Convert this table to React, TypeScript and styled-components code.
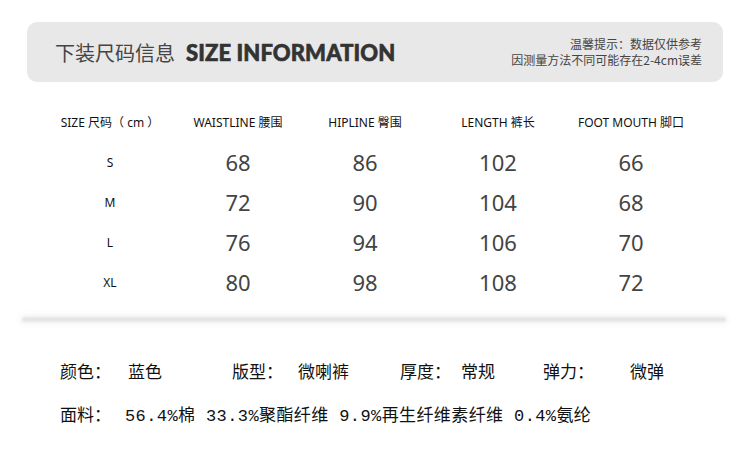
import React from 'react';
import styled, { createGlobalStyle } from 'styled-components';

const GlobalStyle = createGlobalStyle`
  html, body {
    margin: 0;
    padding: 0;
    background: #ffffff;
  }
  body {
    font-family: "Noto Sans", "Noto Sans CJK SC", sans-serif;
  }
`;

const Page = styled.div`
  width: 750px;
  height: 449px;
  overflow: hidden;
  background: #fff;
  padding-top: 22px;
  box-sizing: border-box;
`;

const Banner = styled.div`
  margin: 0 27px;
  height: 60px;
  border-radius: 10px;
  background: #e8e8e8;
  display: flex;
  align-items: center;
  justify-content: space-between;
  padding: 0 21px 0 28px;
`;

const Title = styled.div`
  display: flex;
  align-items: baseline;
  gap: 11px;
`;

const TitleCn = styled.span`
  font-family: "Noto Sans CJK SC", sans-serif;
  font-size: 20px;
  color: #454545;
`;

const TitleEn = styled.span`
  font-family: "Lato", "Open Sans", sans-serif;
  font-weight: 900;
  font-size: 22px;
  color: #333;
  letter-spacing: 0.1px;
  -webkit-text-stroke: 0.6px #333;
`;

const Note = styled.div`
  font-family: "Noto Sans CJK SC", sans-serif;
  font-size: 12px;
  line-height: 16px;
  color: #444;
  text-align: right;
`;

const Table = styled.div`
  margin: 20px 0 0 46px;
  display: grid;
  grid-template-columns: 128px 128px 126px 140px 126px;
`;

const Cell = styled.div<{ $big?: boolean }>`
  height: 40px;
  display: flex;
  align-items: center;
  justify-content: center;
  font-family: "Noto Sans", "Noto Sans CJK SC", sans-serif;
  font-size: ${(p) => (p.$big ? '22px' : '12px')};
  color: ${(p) => (p.$big ? '#444' : '#111')};
  white-space: nowrap;
`;

const Divider = styled.div`
  margin: 15px 24px 0 22px;
  height: 5px;
  background: #e4e4e4;
  border-radius: 3px;
  filter: blur(1.2px);
  box-shadow: 0 0 6px 3px rgba(0, 0, 0, 0.035);
`;

const Info = styled.div`
  padding-left: 60px;
  margin-top: 37px;
  font-family: "Liberation Mono", "Noto Sans CJK SC", monospace;
  font-size: 17px;
  color: #111;
`;

const InfoRow = styled.div`
  display: flex;
  align-items: center;
  height: 22px;
  & + & {
    margin-top: 21px;
  }
`;

const Item = styled.span<{ $w: number }>`
  display: inline-block;
  width: ${(p) => p.$w}px;
  white-space: nowrap;
`;

const Fabric = styled.span`
  letter-spacing: 0.4px;
  white-space: nowrap;
`;

const heads = ['SIZE 尺码（ cm ）', 'WAISTLINE 腰围', 'HIPLINE 臀围', 'LENGTH 裤长', 'FOOT MOUTH 脚口'];
const rows: [string, number, number, number, number][] = [
  ['S', 68, 86, 102, 66],
  ['M', 72, 90, 104, 68],
  ['L', 76, 94, 106, 70],
  ['XL', 80, 98, 108, 72],
];

export default function App() {
  return (
    <Page>
      <GlobalStyle />
      <Banner>
        <Title>
          <TitleCn>下装尺码信息</TitleCn>
          <TitleEn>SIZE INFORMATION</TitleEn>
        </Title>
        <Note>
          温馨提示：数据仅供参考
          <br />
          因测量方法不同可能存在2-4cm误差
        </Note>
      </Banner>
      <Table>
        {heads.map((h) => (
          <Cell key={h}>{h}</Cell>
        ))}
        {rows.map((r) =>
          r.map((v, i) => (
            <Cell $big={i > 0} key={`${r[0]}-${i}`}>
              {v}
            </Cell>
          ))
        )}
      </Table>
      <Divider />
      <Info>
        <InfoRow>
          <Item $w={68}>颜色：</Item>
          <Item $w={104}>蓝色</Item>
          <Item $w={66}>版型：</Item>
          <Item $w={102}>微喇裤</Item>
          <Item $w={61}>厚度：</Item>
          <Item $w={82}>常规</Item>
          <Item $w={87}>弹力：</Item>
          <Item $w={60}>微弹</Item>
        </InfoRow>
        <InfoRow>
          <Item $w={65}>面料：</Item>
          <Fabric>56.4%棉 33.3%聚酯纤维 9.9%再生纤维素纤维 0.4%氨纶</Fabric>
        </InfoRow>
      </Info>
    </Page>
  );
}
